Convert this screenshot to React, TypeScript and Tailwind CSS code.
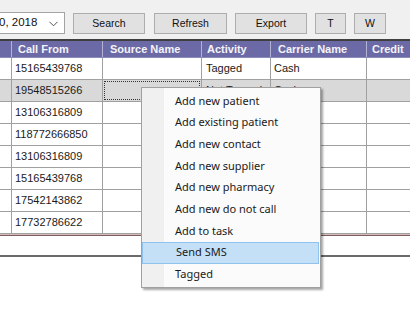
import React from 'react';

type Row = {
  callFrom: string;
  activity?: string;
  carrier?: string;
};

const rows: Row[] = [
  { callFrom: '15165439768', activity: 'Tagged', carrier: 'Cash' },
  { callFrom: '19548515266', activity: 'Not Tagged', carrier: 'Cash' },
  { callFrom: '13106316809' },
  { callFrom: '118772666850' },
  { callFrom: '13106316809' },
  { callFrom: '15165439768' },
  { callFrom: '17542143862' },
  { callFrom: '17732786622' },
];

const menuItems = [
  'Add new patient',
  'Add existing patient',
  'Add new contact',
  'Add new supplier',
  'Add new pharmacy',
  'Add new do not call',
  'Add to task',
  'Send SMS',
  'Tagged',
];

const cols = 'grid grid-cols-[12px_91px_99px_69px_96px_43px]';

const ToolButton = ({ label, className }: { label: string; className: string }) => (
  <div
    className={`h-[21px] flex items-center justify-center bg-[#e1e1e1] border border-[#adadad] text-[10.5px] text-[#111] ${className}`}
  >
    {label}
  </div>
);

const App = () => {
  return (
    <div
      className="relative w-[410px] h-[310px] overflow-hidden bg-white"
      style={{ fontFamily: '"Liberation Sans", Arial, sans-serif' }}
    >
      {/* toolbar */}
      <div className="h-[39px] bg-[#f0f0f0] flex items-start pt-[12px]">
        <div className="w-[66px] h-[22px] -ml-[1px] bg-white border border-[#a3a3a3] flex items-center justify-between pr-[6px] text-[11.5px] text-[#111]">
          <span className="-ml-[1px]">0, 2018</span>
          <svg width="9" height="6" viewBox="0 0 9 6" className="mt-[1px]">
            <path d="M0.5 0.8 L4.5 4.8 L8.5 0.8" fill="none" stroke="#555" strokeWidth="1" />
          </svg>
        </div>
        <ToolButton label="Search" className="ml-[8px] w-[72px] mt-[1px]" />
        <ToolButton label="Refresh" className="ml-[9px] w-[73px] mt-[1px]" />
        <ToolButton label="Export" className="ml-[8px] w-[72px] mt-[1px]" />
        <ToolButton label="T" className="ml-[8px] w-[31px] mt-[1px]" />
        <ToolButton label="W" className="ml-[8px] w-[32px] mt-[1px]" />
      </div>

      {/* grid */}
      <div className="border-t-2 border-[#3f3f3f]">
        <div className={`${cols} h-[17px] bg-[#6b6aa6] text-[11px] font-bold text-[#f4f4f8] border-b border-[#8d8cb9]`}>
          <div className="border-r border-[#b4b3d6]" />
          <div className="border-r border-[#b4b3d6] pl-[6px] leading-[16px]">Call From</div>
          <div className="border-r border-[#b4b3d6] pl-[7px] leading-[16px]">Source Name</div>
          <div className="border-r border-[#b4b3d6] pl-[5px] leading-[16px]">Activity</div>
          <div className="border-r border-[#b4b3d6] pl-[7px] leading-[16px] whitespace-nowrap">Carrier Name</div>
          <div className="pl-[5px] leading-[16px] whitespace-nowrap overflow-hidden">Credit</div>
        </div>
        {rows.map((r, i) => {
          const sel = i === 1;
          return (
            <div
              key={i}
              className={`${cols} h-[22px] text-[11px] text-[#1a1a1a] ${sel ? 'bg-[#d9d9d9]' : 'bg-white'}`}
            >
              <div className="border-r border-b border-[#a0a0a0]" />
              <div className="border-r border-b border-[#a0a0a0] pl-[3px] leading-[21px]">{r.callFrom}</div>
              <div className="border-r border-b border-[#a0a0a0] p-[1px]">
                {sel && <div className="w-full h-full border border-dotted border-[#333]" />}
              </div>
              <div className="border-r border-b border-[#a0a0a0] pl-[4px] leading-[21px] whitespace-nowrap overflow-hidden">
                {r.activity}
              </div>
              <div className="border-r border-b border-[#a0a0a0] pl-[3px] leading-[21px]">{r.carrier}</div>
              <div className="border-b border-[#a0a0a0]" />
            </div>
          );
        })}
        <div className="h-[1px] bg-[#d6bcbc]" />
        <div className="h-[1px] bg-[#7c5c5c]" />
        <div className="h-[19px] bg-white" />
        <div className="h-[2px] bg-[#6a6a6a]" />
      </div>

      {/* context menu */}
      <div
        className="absolute left-[141px] top-[87px] w-[180px] bg-[#fbfbfb] border border-[#a0a0a0] shadow-[2px_2px_2px_rgba(0,0,0,0.35)] py-[2px] text-[11px] text-[#1a1a1a]"
        style={{ fontFamily: '"Noto Sans", "Open Sans", sans-serif' }}
      >
        <div className="absolute left-0 top-0 bottom-0 w-[22px] bg-[#f0f0f0]" />
        {menuItems.map((m) => (
          <div
            key={m}
            className={`relative h-[21.7px] flex items-center pl-[33px] mr-[1px] ${
              m === 'Send SMS' ? 'bg-[#c4e0f7] border border-[#8fc3ee] pl-[32px]' : ''
            }`}
          >
            {m}
          </div>
        ))}
      </div>
    </div>
  );
};

export default App;
